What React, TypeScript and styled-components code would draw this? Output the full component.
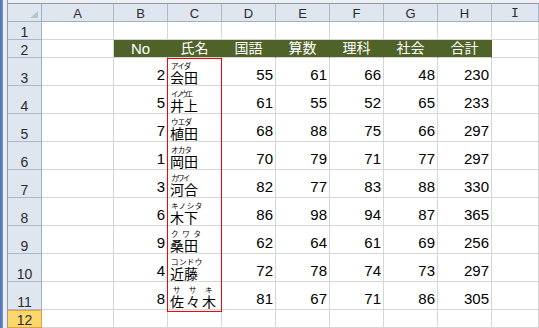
import React from "react";
import styled, { createGlobalStyle } from "styled-components";

interface Student {
  no: number;
  name: string;
  kana: string;
  kanaGap: number;
  kanaShift?: number;
  nameGap?: number;
  scores: number[];
}

const students: Student[] = [
  { no: 2, name: "会田", kana: "アイダ", kanaGap: -0.8, scores: [55, 61, 66, 48] },
  { no: 5, name: "井上", kana: "イノウエ", kanaGap: -2.6, scores: [61, 55, 52, 65] },
  { no: 7, name: "植田", kana: "ウエダ", kanaGap: -0.8, scores: [68, 88, 75, 66] },
  { no: 1, name: "岡田", kana: "オカタ", kanaGap: -0.8, scores: [70, 79, 71, 77] },
  { no: 3, name: "河合", kana: "カワイ", kanaGap: -1.6, scores: [82, 77, 83, 88] },
  { no: 6, name: "木下", kana: "キノシタ", kanaGap: 0.6, scores: [86, 98, 94, 87] },
  { no: 9, name: "桑田", kana: "クワタ", kanaGap: 3.8, scores: [62, 64, 61, 69] },
  { no: 4, name: "近藤", kana: "コンドウ", kanaGap: 0.4, scores: [72, 78, 74, 73] },
  {
    no: 8,
    name: "佐々木",
    kana: "ササキ",
    kanaGap: 8.5,
    kanaShift: 3,
    nameGap: 2,
    scores: [81, 67, 71, 86],
  },
];

const headings = ["No", "氏名", "国語", "算数", "理科", "社会", "合計"];
const columns = ["A", "B", "C", "D", "E", "F", "G", "H", "I"];

const App = () => {
  return (
    <>
      <GlobalStyle />
      <Window>
        <Rail />
        <Main>
          <TopStrip />
          <Sheet>
            <Corner>
              <Triangle />
            </Corner>
            {columns.map((c) => (
              <ColHeader key={c} $serif={c === "I"}>
                {c}
              </ColHeader>
            ))}

            <RowHeader>1</RowHeader>
            {columns.map((c) => (
              <Cell key={"r1" + c} />
            ))}

            <RowHeader>2</RowHeader>
            <Cell />
            {headings.map((h) => (
              <GreenCell key={h} $latin={h === "No"}>
                {h}
              </GreenCell>
            ))}
            <Cell />

            {students.map((s, i) => (
              <React.Fragment key={s.name}>
                <RowHeader>{i + 3}</RowHeader>
                <Cell />
                <NumCell>{s.no}</NumCell>
                <NameCell>
                  <Kana $gap={s.kanaGap} $shift={s.kanaShift ?? 1}>
                    {s.kana}
                  </Kana>
                  <NameText $gap={s.nameGap ?? 0}>{s.name}</NameText>
                </NameCell>
                {s.scores.map((v, j) => (
                  <NumCell key={j}>{v}</NumCell>
                ))}
                <NumCell>{s.scores.reduce((a, b) => a + b, 0)}</NumCell>
                <Cell />
              </React.Fragment>
            ))}

            <RowHeader $active>12</RowHeader>
            {columns.map((c) => (
              <Cell key={"r12" + c} />
            ))}

            <Selection />
          </Sheet>
        </Main>
      </Window>
    </>
  );
};

export default App;

const GlobalStyle = createGlobalStyle`
  html, body {
    margin: 0;
    padding: 0;
    background: #fff;
    overflow: hidden;
  }
  body {
    font-family: "Liberation Sans", Arial, sans-serif;
  }
`;

const Window = styled.div`
  display: flex;
  width: 539px;
  height: 328px;
  overflow: hidden;
`;

const Rail = styled.div`
  flex: 0 0 8px;
  background: linear-gradient(
    to right,
    #4d71b6 0,
    #7090cc 3px,
    #f2f4f8 3px,
    #e4e8ee 7px,
    #8e9bb0 7px
  );
`;

const Main = styled.div`
  flex: 1;
  display: flex;
  flex-direction: column;
  min-width: 0;
`;

const TopStrip = styled.div`
  height: 3px;
  background: #eef0f3;
  border-bottom: 1px solid #8f9bab;
`;

const Sheet = styled.div`
  position: relative;
  display: grid;
  grid-template-columns: 34px 72px repeat(7, 54px) 1fr;
  grid-template-rows: repeat(3, 18px) repeat(9, 28px) 18px;

  & > div {
    box-sizing: border-box;
    min-width: 0;
    overflow: hidden;
  }
`;

const Corner = styled.div`
  display: flex;
  justify-content: flex-end;
  align-items: flex-end;
  padding: 0 3px 3px 0;
  background: #dfe6ef;
  border-right: 1px solid #9eb0c6;
  border-bottom: 1px solid #9eb0c6;
`;

const Triangle = styled.div`
  width: 0;
  height: 0;
  border-left: 8px solid transparent;
  border-bottom: 7px solid #b9c3d0;
`;

const ColHeader = styled.div<{ $serif?: boolean }>`
  display: flex;
  align-items: center;
  justify-content: center;
  padding-top: 1px;
  background: #dfe6ef;
  border-right: 1px solid #aab8c9;
  border-bottom: 1px solid #9eb0c6;
  color: #2c2c2c;
  font-family: ${(p) =>
    p.$serif ? '"Liberation Mono", monospace' : '"Liberation Sans", sans-serif'};
  font-size: 13px;
  line-height: 13px;
`;

const RowHeader = styled.div<{ $active?: boolean }>`
  display: flex;
  align-items: flex-end;
  justify-content: center;
  background: ${(p) => (p.$active ? "#fad86d" : "#dfe6ef")};
  border-right: 1px solid ${(p) => (p.$active ? "#e9a23b" : "#9eb0c6")};
  border-bottom: 1px solid ${(p) => (p.$active ? "#e9a23b" : "#aab8c9")};
  box-shadow: ${(p) => (p.$active ? "inset 0 1px 0 #e9a23b" : "none")};
  color: #2c2c2c;
  font-size: 14px;
  line-height: 14px;
`;

const Cell = styled.div`
  display: flex;
  align-items: flex-end;
  background: #fff;
  border-right: 1px solid #d6d6d6;
  border-bottom: 1px solid #d6d6d6;
`;

const GreenCell = styled.div<{ $latin?: boolean }>`
  display: flex;
  align-items: flex-end;
  justify-content: center;
  padding-bottom: 1px;
  background: #4f6228;
  border-right: 1px solid #4f6228;
  border-bottom: 1px solid #d6d6d6;
  color: #fff;
  font-family: "Liberation Sans", "Noto Sans CJK JP", sans-serif;
  font-size: ${(p) => (p.$latin ? "15px" : "14px")};
  line-height: 15px;
`;

const NumCell = styled(Cell)`
  justify-content: flex-end;
  padding: 0 2px 3px 0;
  color: #000;
  font-size: 15px;
  line-height: 15px;
`;

const NameCell = styled(Cell)`
  flex-direction: column;
  align-items: flex-start;
  justify-content: flex-end;
  padding: 0 0 1px 2px;
  color: #000;
  font-family: "Noto Sans CJK JP", sans-serif;
`;

const Kana = styled.div<{ $gap: number; $shift: number }>`
  margin-left: ${(p) => p.$shift}px;
  font-size: 7.5px;
  line-height: 8px;
  letter-spacing: ${(p) => p.$gap}px;
  white-space: nowrap;
`;

const NameText = styled.div<{ $gap: number }>`
  font-size: 14px;
  line-height: 14px;
  letter-spacing: ${(p) => p.$gap}px;
  white-space: nowrap;
`;

const Selection = styled.div`
  position: absolute;
  left: 159px;
  top: 54px;
  width: 55px;
  height: 254px;
  box-sizing: border-box;
  border: 1px solid #ff0000;
  pointer-events: none;
`;
